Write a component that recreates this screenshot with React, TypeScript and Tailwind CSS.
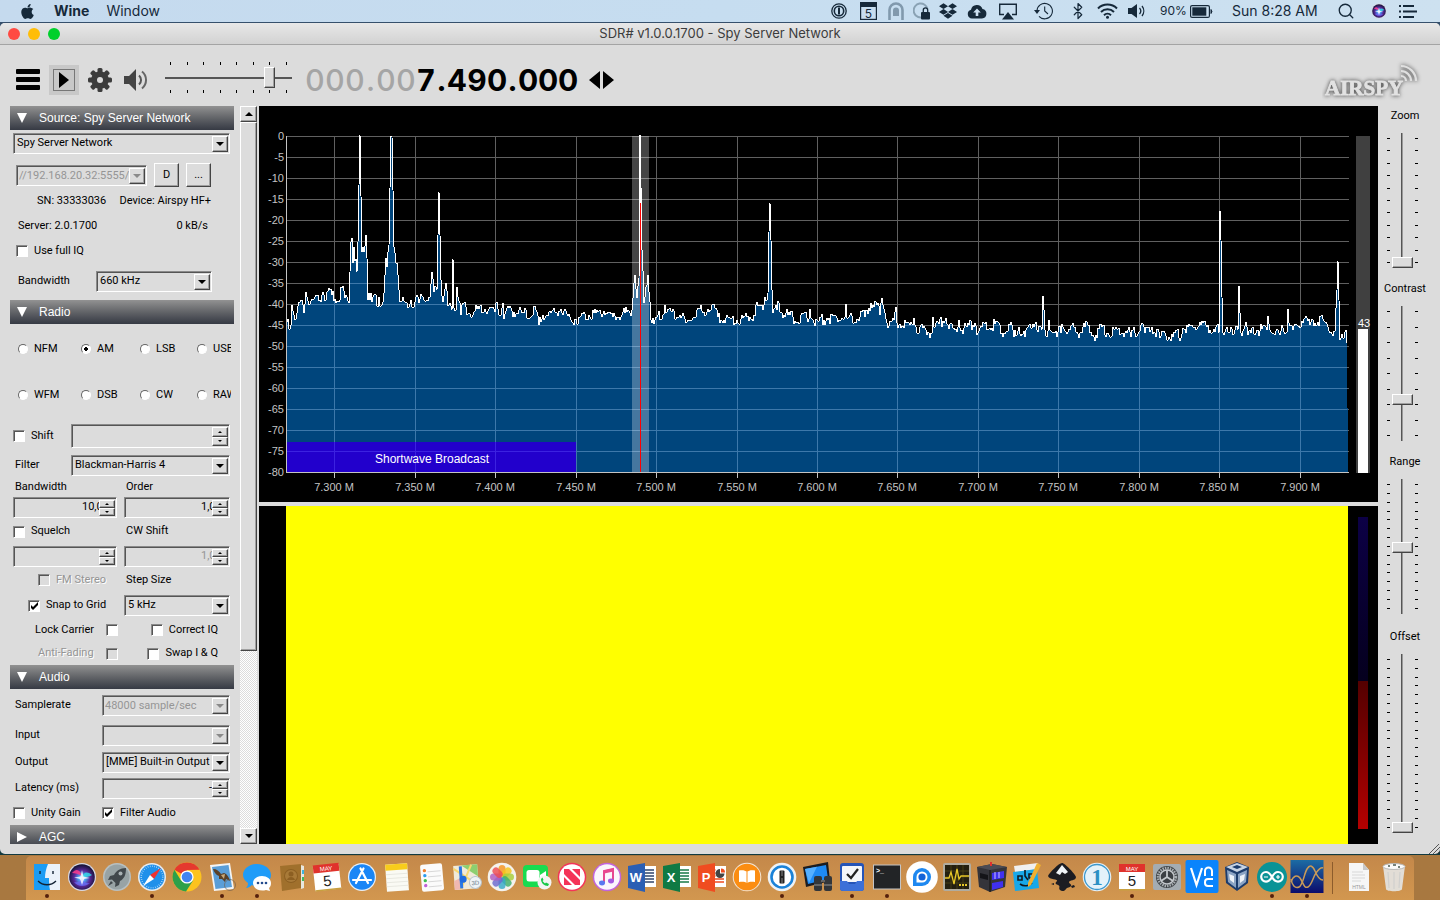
import React from 'react';
import { Bluetooth, Search } from 'lucide-react';
import { FaApple, FaDropbox } from 'react-icons/fa';

const sunken =
  'border border-t-[#8a8a8a] border-l-[#8a8a8a] border-b-white border-r-white shadow-[inset_1px_1px_0_#555]';
const raised =
  'bg-[#dcdcdc] border border-t-white border-l-white border-b-[#444] border-r-[#444] shadow-[inset_-1px_-1px_0_#a0a0a0]';

/* ---------- Mac menu bar ---------- */

const SiriGlyph = ({ className }: { className: string }) => (
  <svg viewBox="0 0 30 30" className={className}>
    <defs>
      <radialGradient id="siri" cx="50%" cy="55%" r="55%">
        <stop offset="0" stopColor="#e8f8ff" />
        <stop offset=".25" stopColor="#4aa0f0" />
        <stop offset=".55" stopColor="#5a2a9c" />
        <stop offset="1" stopColor="#10102e" />
      </radialGradient>
    </defs>
    <circle cx="15" cy="15" r="14" fill="#d8d8e4" />
    <circle cx="15" cy="15" r="12.8" fill="url(#siri)" />
    <path d="M5 11c4-5 8-4 10 3-4-2-7-3-10-3z" fill="#ff3c8e" opacity=".85" />
    <path d="M25 13c-5-4-8-3-10 2 4 0 7 0 10-2z" fill="#35d8e8" opacity=".85" />
    <path d="M7 20c4 1 7-1 8-5 1 5 4 7 8 6-5 4-12 4-16-1z" fill="#6a6cf5" opacity=".8" />
    <path d="M15 8l1.5 6.5L23 16l-6 1-2 6-2-6-6-1.5 6.5-1z" fill="#fff" opacity=".8" />
  </svg>
);

const MenuBar = () => (
  <header className="flex h-[23px] shrink-0 items-center border-b border-[#36506c] bg-linear-to-r from-[#c5daee] via-[#c6ddf0] to-[#cde1f0] font-[Inter,sans-serif] text-sm text-[#16293a]">
    <FaApple className="ml-[19px] size-[17px]" />
    <button className="ml-[18px] font-bold">Wine</button>
    <button className="ml-[17px]">Window</button>
    <div className="ml-auto flex items-center">
      <svg viewBox="0 0 16 16" className="size-4">
        <circle cx="8" cy="8" r="7.2" fill="none" stroke="currentColor" strokeWidth="1.3" />
        <circle cx="8" cy="8" r="4.7" fill="none" stroke="currentColor" strokeWidth="1.6" />
        <rect x="7" y="4.5" width="2" height="7" fill="currentColor" />
      </svg>
      <svg viewBox="0 0 17 18" className="ml-[13px] h-[18px] w-[17px]">
        <rect x=".6" y=".6" width="15.8" height="16.8" fill="none" stroke="currentColor" strokeWidth="1.2" />
        <rect width="17" height="5" fill="currentColor" />
        <text x="8.5" y="15.5" fontSize="12" textAnchor="middle" fill="currentColor">5</text>
      </svg>
      <svg viewBox="0 0 16 18" className="ml-[11px] h-[18px] w-4 text-[#8199ad]">
        <path d="M1.5 18V8a6.5 6.5 0 0 1 13 0v10" fill="none" stroke="currentColor" strokeWidth="2.6" />
        <path d="M5 14V8.5a3 3 0 0 1 6 0V14z" fill="currentColor" />
      </svg>
      <svg viewBox="0 0 17 18" className="ml-[9px] h-[18px] w-[17px]">
        <path d="M8 15.5A7 7 0 1 1 14.5 7" fill="none" stroke="#8aa2b4" strokeWidth="2" />
        <rect x="8" y="10" width="9" height="7.5" rx="1" fill="currentColor" />
        <path d="M10.3 10V8a2.2 2.2 0 0 1 4.4 0v2" fill="none" stroke="currentColor" strokeWidth="1.3" />
      </svg>
      <FaDropbox className="ml-[9px] h-[18px] w-[18px]" />
      <svg viewBox="0 0 20 16" className="ml-[10px] h-4 w-5">
        <path d="M5 15.5a4.5 4.5 0 0 1-1-8.8A6 6 0 0 1 15.5 6 4.8 4.8 0 0 1 15 15.5z" fill="currentColor" />
        <path d="M10 5.5l3.8 4h-2.5v3.5H8.7V9.5H6.2z" fill="#cbdff0" />
      </svg>
      <svg viewBox="0 0 18 17" className="ml-3 h-[17px] w-[18px]">
        <path d="M5 11.5H.7V1.2h16.6v10.3H13" fill="none" stroke="currentColor" strokeWidth="1.4" />
        <path d="M9 9l6 7.5H3z" fill="currentColor" />
      </svg>
      <svg viewBox="0 0 19 18" className="ml-[17px] h-[18px] w-[19px]">
        <path d="M3 9a7.7 7.7 0 1 1 2 5.3" fill="none" stroke="currentColor" strokeWidth="1.1" />
        <path d="M0 8h6L3 12z" fill="currentColor" />
        <path d="M10.7 4.5V9l3.3 3" fill="none" stroke="currentColor" strokeWidth="1.1" />
      </svg>
      <Bluetooth className="ml-4 size-[18px]" strokeWidth={1.6} />
      <svg viewBox="0 0 21 16" className="ml-[10px] h-4 w-[21px]">
        <g fill="none" stroke="currentColor" strokeWidth="2">
          <path d="M1 5.5a13.5 13.5 0 0 1 19 0" />
          <path d="M4 9a9.2 9.2 0 0 1 13 0" />
          <path d="M7 12.2a5 5 0 0 1 7 0" />
        </g>
        <circle cx="10.5" cy="14.3" r="1.5" fill="currentColor" />
      </svg>
      <svg viewBox="0 0 18 16" className="ml-[10px] h-4 w-[18px]">
        <path d="M0 5h3.5L9 1v14l-5.5-4H0z" fill="currentColor" />
        <path d="M11.5 5a4.5 4.5 0 0 1 0 6M14 3a8 8 0 0 1 0 10" fill="none" stroke="currentColor" strokeWidth="1.3" />
      </svg>
      <span className="ml-[14px] w-[30px] text-xs">90%</span>
      <svg viewBox="0 0 23 13" className="h-[13px] w-[23px]">
        <rect x=".6" y=".6" width="18.8" height="11.8" rx="1.5" fill="none" stroke="currentColor" strokeWidth="1.2" />
        <rect x="2.3" y="2.3" width="14" height="8.4" fill="currentColor" />
        <path d="M21 4.5a3 3 0 0 1 0 4z" fill="currentColor" stroke="currentColor" />
      </svg>
      <time className="ml-[19px] w-[105px] whitespace-nowrap">Sun 8:28 AM</time>
      <Search className="size-[18px]" strokeWidth={1.8} />
      <SiriGlyph className="ml-4 size-4" />
      <svg viewBox="0 0 18 13" className="mr-[23px] ml-3 h-[13px] w-[18px]" fill="currentColor">
        <path d="M0 0h2v2H0zM4 0h11v2H4zM0 5.5h2v2H0zM4 5.5h14v2H4zM0 11h2v2H0zM4 11h11v2H4z" />
      </svg>
    </div>
  </header>
);

/* ---------- Toolbar ---------- */

const Ticks = ({ count, vertical }: { count: number; vertical?: boolean }) => (
  <div className={vertical ? 'flex flex-col justify-between py-[5px]' : 'flex justify-between px-[5px]'} aria-hidden>
    {Array.from({ length: count }, (_, i) => (
      <span key={i} className={vertical ? 'h-px w-[3px] bg-black' : 'h-[3px] w-px bg-black'} />
    ))}
  </div>
);

const digits = '000.007.490.000'.split('');

const Toolbar = () => (
  <div className="flex h-[61px] shrink-0 items-center pt-2">
    <button aria-label="Menu" className="ml-4 flex w-6 flex-col gap-[3px]">
      <span className="h-[5px] rounded-[1px] bg-black" />
      <span className="h-[5px] rounded-[1px] bg-black" />
      <span className="h-[5px] rounded-[1px] bg-black" />
    </button>
    <button aria-label="Start" className="ml-[9px] flex size-[30px] items-center justify-center bg-[#c8c8c8]">
      <span className="flex size-[22px] items-center justify-center border border-[#777]">
        <svg viewBox="0 0 10 16" className="h-4 w-2.5">
          <path d="M0 0l10 8-10 8z" />
        </svg>
      </span>
    </button>
    <button aria-label="Settings" className="ml-[9px]">
      <svg viewBox="0 0 24 24" className="size-6 text-[#3c3c3c]">
        {[0, 45, 90, 135].map((a) => (
          <rect key={a} x="9.5" y="0" width="5" height="24" rx="1.5" fill="currentColor" transform={`rotate(${a} 12 12)`} />
        ))}
        <circle cx="12" cy="12" r="8.8" fill="currentColor" />
        <circle cx="12" cy="12" r="3" fill="#dcdcdc" />
      </svg>
    </button>
    <button aria-label="Mute" className="ml-3">
      <svg viewBox="0 0 24 24" className="size-6">
        <path d="M0 8h5l7-7v22l-7-7H0z" fill="#444" />
        <path d="M15 7.5a6 6 0 0 1 0 9" fill="none" stroke="#555" strokeWidth="2" />
        <path d="M18 3.5a11 11 0 0 1 0 17" fill="none" stroke="#666" strokeWidth="2" />
      </svg>
    </button>
    <div className="ml-[17px] flex w-[127px] flex-col gap-0.5 pb-1">
      <Ticks count={8} />
      <input
        type="range"
        aria-label="Volume"
        defaultValue={85}
        className="h-[21px] w-full appearance-none bg-[linear-gradient(#555,#555)] bg-[length:100%_2px] bg-center bg-no-repeat [&::-webkit-slider-thumb]:h-[21px] [&::-webkit-slider-thumb]:w-[11px] [&::-webkit-slider-thumb]:appearance-none [&::-webkit-slider-thumb]:border [&::-webkit-slider-thumb]:border-t-white [&::-webkit-slider-thumb]:border-r-[#444] [&::-webkit-slider-thumb]:border-b-[#444] [&::-webkit-slider-thumb]:border-l-white [&::-webkit-slider-thumb]:bg-[#dcdcdc] [&::-webkit-slider-thumb]:shadow-[inset_-1px_-1px_0_#a0a0a0]"
      />
      <Ticks count={8} />
    </div>
    <div className="ml-[13px] flex font-[Inter,sans-serif] text-[30px] leading-8">
      {digits.map((d, i) => (
        <span
          key={i}
          className={`flex justify-center ${d === '.' ? 'w-[11px]' : 'w-5'} ${i < 6 ? 'font-medium text-[#a5a5a5]' : 'font-bold text-black'}`}
        >
          {d}
        </span>
      ))}
    </div>
    <button aria-label="Tuning style" className="ml-[11px]">
      <svg viewBox="0 0 25 18" className="h-[18px] w-[25px]">
        <path d="M11 0v18L0 9zM14 0v18L25 9z" />
      </svg>
    </button>
    <svg viewBox="0 0 100 44" className="mr-[18px] ml-auto h-11 w-[100px]" role="img" aria-label="Airspy">
      <g className="drop-shadow-[0_0_2px_#333]">
        <text x="3" y="37" fontSize="21" className="font-['Liberation_Serif',serif] font-bold" fill="#e2e2e2" stroke="#e2e2e2" strokeWidth=".8">
          AIRSPY
        </text>
        <path d="M79 8a15 15 0 0 1 15 15M79 13a10 10 0 0 1 10 10M79 18a5 5 0 0 1 5 5" fill="none" stroke="#e0e0e0" strokeWidth="2.2" />
      </g>
    </svg>
  </div>
);

/* ---------- Sidebar controls ---------- */

const Arrow = ({ muted }: { muted?: boolean }) => (
  <svg viewBox="0 0 8 4" className="h-1 w-2">
    <path d="M0 0h8L4 4z" fill={muted ? '#8a8a8a' : '#000'} />
  </svg>
);

type ComboProps = { label: string; value: string; disabled?: boolean; className: string };

const Combo = ({ label, value, disabled, className }: ComboProps) => (
  <div className={`flex h-[21px] p-px pt-0.5 ${sunken} ${className}`}>
    <select
      aria-label={label}
      disabled={disabled}
      className="min-w-0 flex-1 appearance-none bg-transparent pb-[3px] pl-0.5 leading-none disabled:pb-0 disabled:pl-px disabled:text-[#959595] disabled:opacity-100"
    >
      <option>{value}</option>
    </select>
    <span className={`flex w-4 items-center justify-center ${raised}`}>
      <Arrow muted={disabled} />
    </span>
  </div>
);

type SpinProps = { label: string; value?: string; disabled?: boolean; className: string; inputClass?: string };

const Spin = ({ label, value = '', disabled, className, inputClass = '' }: SpinProps) => (
  <div className={`flex p-px pt-0.5 ${sunken} ${className}`}>
    <input
      type="text"
      aria-label={label}
      defaultValue={value}
      disabled={disabled}
      className={`min-w-0 flex-1 bg-transparent pb-0.5 leading-none disabled:text-[#959595] ${inputClass}`}
    />
    <div className="flex w-4 flex-col">
      <button aria-label={`${label} up`} className={`flex flex-1 items-center justify-center ${raised}`}>
        <svg viewBox="0 0 4 2" className="h-0.5 w-1"><path d="M2 0l2 2H0z" /></svg>
      </button>
      <button aria-label={`${label} down`} className={`flex flex-1 items-center justify-center ${raised}`}>
        <svg viewBox="0 0 4 2" className="h-0.5 w-1"><path d="M0 0h4L2 2z" /></svg>
      </button>
    </div>
  </div>
);

type CheckProps = { label: string; checked?: boolean; disabled?: boolean; before?: boolean; className?: string; gap?: string };

const Check = ({ label, checked, disabled, before, className = '', gap = 'gap-1.5' }: CheckProps) => (
  <label
    className={`flex items-center whitespace-nowrap ${gap} ${before ? 'flex-row-reverse' : ''} ${disabled ? 'text-[#959595] [text-shadow:1px_1px_#fff]' : ''} ${className}`}
  >
    <span className="grid">
      <input
        type="checkbox"
        defaultChecked={checked}
        disabled={disabled}
        className={`size-3 appearance-none [grid-area:1/1] ${disabled ? '' : 'bg-white'} ${sunken}`}
      />
      {checked && (
        <svg viewBox="0 0 12 12" className="pointer-events-none size-3 [grid-area:1/1]">
          <path d="M3 5v3l2 2 5-5V2L5 7z" />
        </svg>
      )}
    </span>
    {label}
  </label>
);

const Radio = ({ label, checked }: { label: string; checked?: boolean }) => (
  <label className="flex items-center gap-1.5">
    <input
      type="radio"
      name="mode"
      defaultChecked={checked}
      className="size-2.5 shrink-0 appearance-none rounded-full border border-t-[#666] border-r-white border-b-white border-l-[#666] bg-white checked:bg-[radial-gradient(circle,#000_2px,#fff_2px)]"
    />
    {label}
  </label>
);

const PanelHeader = ({ title, closed }: { title: string; closed?: boolean }) => (
  <button className="flex h-6 w-full shrink-0 items-center bg-linear-to-b from-[#929292] via-[#626468] to-[#363a44] pl-[7px] font-['Liberation_Sans',sans-serif] text-xs text-white">
    <svg viewBox="0 0 10 10" className="size-2.5" fill="#fff">
      <path d={closed ? 'M0 0l10 5-10 5z' : 'M0 0h10L5 10z'} />
    </svg>
    <span className="ml-3">{title}</span>
  </button>
);

const Sidebar = () => (
  <aside className="ml-2.5 flex w-56 shrink-0 flex-col overflow-hidden">
    <PanelHeader title="Source: Spy Server Network" />
    <div className="flex h-[27px] shrink-0 items-center pl-[3px]">
      <Combo label="Source" value="Spy Server Network" className="w-[217px]" />
    </div>
    <div className="flex h-9 shrink-0 items-center pl-1.5">
      <Combo label="Server address" value="//192.168.20.32:5555/" disabled className="w-[131px]" />
      <button className={`ml-[7px] h-6 w-[25px] ${raised}`}>D</button>
      <button className={`ml-[7px] h-6 w-[25px] ${raised}`}>...</button>
    </div>
    <div className="flex h-4 shrink-0 items-center justify-between pr-[23px] pl-[27px]">
      <span>SN: 33333036</span>
      <span>Device: Airspy HF+</span>
    </div>
    <div className="flex h-[34px] shrink-0 items-center justify-between pr-[26px] pl-2">
      <span>Server: 2.0.1700</span>
      <span>0 kB/s</span>
    </div>
    <Check label="Use full IQ" className="h-4 shrink-0 pl-1.5" />
    <div className="flex h-[41px] shrink-0 items-center pt-1 pl-2">
      <span className="w-[78px]">Bandwidth</span>
      <Combo label="Source bandwidth" value="660 kHz" className="w-[116px]" />
    </div>

    <PanelHeader title="Radio" />
    <div className="mr-[3px] grid shrink-0 grid-cols-[63px_59px_57px_60px] grid-rows-[50px_42px] items-center overflow-hidden pl-2">
      <Radio label="NFM" />
      <Radio label="AM" checked />
      <Radio label="LSB" />
      <Radio label="USB" />
      <Radio label="WFM" />
      <Radio label="DSB" />
      <Radio label="CW" />
      <Radio label="RAW" />
    </div>
    <div className="flex h-9 shrink-0 items-center pt-1 pl-[3px]">
      <Check label="Shift" className="w-[58px]" />
      <Spin label="Shift frequency" className="h-6 w-[159px]" />
    </div>
    <div className="flex h-[26px] shrink-0 items-center pl-[5px]">
      <span className="w-14">Filter</span>
      <Combo label="Filter" value="Blackman-Harris 4" className="w-[159px]" />
    </div>
    <div className="flex h-[18px] shrink-0 items-center pl-[5px]">
      <span className="w-[111px]">Bandwidth</span>
      <span>Order</span>
    </div>
    <div className="flex h-[22px] shrink-0 items-center gap-[7px] pl-[3px]">
      <Spin label="Filter bandwidth" value="10,000" className="h-[21px] w-[104px]" inputClass="pl-[67px]" />
      <Spin label="Filter order" value="1,000" className="h-[21px] w-[106px]" inputClass="pl-[75px]" />
    </div>
    <div className="flex h-[27px] shrink-0 items-center pl-[3px]">
      <Check label="Squelch" className="w-[113px]" />
      <span>CW Shift</span>
    </div>
    <div className="flex h-[22px] shrink-0 items-center gap-[7px] pl-[3px]">
      <Spin label="Squelch level" className="h-[21px] w-[104px]" />
      <Spin label="CW shift" value="1,000" disabled className="h-[21px] w-[106px]" inputClass="pl-[75px]" />
    </div>
    <div className="flex h-[26px] shrink-0 items-center pl-7">
      <Check label="FM Stereo" disabled className="w-[88px]" />
      <span>Step Size</span>
    </div>
    <div className="flex h-[25px] shrink-0 items-center pl-[18px]">
      <Check label="Snap to Grid" checked className="w-24" />
      <Combo label="Step size" value="5 kHz" className="w-[106px]" />
    </div>
    <div className="flex h-6 shrink-0 items-center justify-between pr-4 pl-[25px]">
      <Check label="Lock Carrier" before gap="gap-3" />
      <Check label="Correct IQ" />
    </div>
    <div className="flex h-[23px] shrink-0 items-center justify-between pr-4 pl-7">
      <Check label="Anti-Fading" disabled before gap="gap-3" />
      <Check label="Swap I & Q" />
    </div>

    <PanelHeader title="Audio" />
    <div className="flex h-8 shrink-0 items-center pl-[5px]">
      <span className="w-[87px]">Samplerate</span>
      <Combo label="Samplerate" value="48000 sample/sec" disabled className="w-32" />
    </div>
    <div className="flex h-7 shrink-0 items-center pl-[5px]">
      <span className="w-[87px]">Input</span>
      <Combo label="Input" value="" disabled className="w-32" />
    </div>
    <div className="flex h-[26px] shrink-0 items-center pl-[5px]">
      <span className="w-[87px]">Output</span>
      <Combo label="Output" value="[MME] Built-in Output" className="w-32" />
    </div>
    <div className="flex h-[26px] shrink-0 items-center pl-[5px]">
      <span className="w-[87px]">Latency (ms)</span>
      <Spin label="Latency" value="-" className="h-[21px] w-32" inputClass="text-right" />
    </div>
    <div className="flex h-6 shrink-0 items-center pl-[3px]">
      <Check label="Unity Gain" className="w-[89px]" />
      <Check label="Filter Audio" checked />
    </div>
    <PanelHeader title="AGC" closed />
  </aside>
);

const SidebarScroll = () => (
  <div className="ml-1.5 flex w-[17px] shrink-0 flex-col bg-[repeating-conic-gradient(#fff_0_25%,#dcdcdc_0_50%)] bg-[length:2px_2px]">
    <button aria-label="Scroll up" className={`flex h-4 items-center justify-center ${raised}`}>
      <span className="rotate-180"><Arrow /></span>
    </button>
    <div className={`h-[529px] ${raised}`} />
    <button aria-label="Scroll down" className={`mt-auto flex h-4 items-center justify-center ${raised}`}>
      <Arrow />
    </button>
  </div>
);

/* ---------- Spectrum ---------- */

const trace: [number, number][] = [
  [28, 216], [32, 219], [33, 199], [35, 209], [38, 207], [40, 196], [44, 199], [45, 207], [47, 186], [50, 199],
  [54, 194], [61, 194], [64, 186], [67, 194], [69, 185], [73, 189], [80, 196], [83, 182], [86, 192], [90, 197],
  [91, 166], [92, 136], [93, 132], [94, 157], [95, 141], [98, 166], [99, 136], [100, 79], [101, 29], [102, 90],
  [103, 146], [104, 141], [105, 146], [107, 129], [108, 152], [109, 194], [110, 187], [113, 196], [117, 189], [118, 200],
  [120, 191], [122, 200], [124, 196], [126, 169], [127, 152], [128, 161], [130, 139], [131, 82], [132, 30], [133, 31],
  [134, 84], [135, 141], [138, 157], [139, 169], [140, 184], [141, 196], [148, 197], [150, 201], [152, 194], [155, 201],
  [157, 191], [160, 197], [164, 191], [171, 191], [173, 166], [175, 186], [178, 184], [179, 129], [180, 86], [181, 129],
  [182, 174], [184, 196], [187, 177], [189, 200], [193, 204], [194, 153], [195, 202], [197, 204], [198, 181], [200, 195],
  [202, 209], [204, 197], [210, 207], [220, 203], [230, 203], [236, 206], [238, 196], [241, 210], [244, 197], [245, 213],
  [248, 202], [255, 206], [265, 207], [272, 211], [276, 200], [280, 219], [284, 209], [297, 206], [302, 203], [312, 214],
  [330, 209], [345, 205], [354, 211], [366, 207], [373, 204], [375, 177], [376, 169], [378, 192], [380, 174], [381, 29],
  [382, 81], [383, 144], [385, 197], [387, 181], [389, 169], [391, 196], [392, 214], [395, 218], [398, 211], [404, 209],
  [406, 199], [408, 206], [421, 209], [427, 217], [434, 212], [440, 202], [444, 207], [453, 199], [456, 202], [459, 211],
  [478, 214], [488, 211], [495, 209], [497, 199], [504, 204], [506, 191], [509, 187], [510, 126], [511, 97], [512, 134],
  [513, 184], [514, 207], [518, 204], [520, 197], [523, 207], [534, 211], [541, 217], [546, 206], [549, 216], [551, 203],
  [555, 217], [568, 212], [578, 212], [586, 211], [587, 198], [588, 212], [601, 211], [604, 204], [606, 211], [610, 202],
  [612, 197], [618, 199], [621, 209], [623, 192], [626, 207], [628, 217], [635, 214], [637, 201], [638, 217], [651, 219],
  [655, 212], [657, 221], [673, 227], [674, 211], [676, 221], [687, 212], [689, 219], [698, 226], [700, 214], [703, 224],
  [716, 217], [719, 227], [726, 218], [731, 222], [739, 216], [743, 227], [753, 219], [755, 231], [760, 221], [766, 231],
  [769, 221], [777, 216], [779, 226], [783, 224], [784, 190], [786, 224], [788, 231], [790, 214], [793, 226], [798, 231],
  [803, 218], [809, 226], [816, 221], [821, 227], [829, 219], [835, 231], [843, 221], [848, 227], [869, 224], [872, 231],
  [875, 221], [878, 230], [882, 219], [886, 227], [893, 221], [901, 232], [906, 227], [914, 231], [918, 224], [920, 232],
  [924, 222], [934, 221], [941, 216], [951, 224], [958, 219], [960, 227], [961, 105], [962, 134], [963, 191], [964, 227],
  [968, 221], [974, 229], [979, 224], [980, 180], [982, 227], [987, 216], [989, 229], [998, 224], [1008, 224], [1009, 210],
  [1011, 224], [1021, 229], [1024, 222], [1028, 226], [1029, 203], [1030, 217], [1034, 224], [1038, 219], [1046, 212], [1051, 219],
  [1054, 214], [1065, 215], [1069, 221], [1076, 226], [1078, 184], [1079, 155], [1080, 194], [1081, 234], [1087, 224], [1088, 237],
];

// fills the gaps between the traced bins with a repeatable noise floor
const buildLine = () => {
  const out: string[] = [];
  for (let i = 0; i < trace.length - 1; i++) {
    const [x0, y0] = trace[i];
    const [x1, y1] = trace[i + 1];
    out.push(`${x0} ${y0}`);
    for (let x = x0 + 1; x < x1; x++) {
      const noise = ((Math.sin(x * 12.9898) * 43758.5453) % 1) * 6;
      out.push(`${x} ${Math.round(y0 + ((y1 - y0) * (x - x0)) / (x1 - x0) + noise)}`);
    }
  }
  const last = trace[trace.length - 1];
  out.push(`${last[0]} ${last[1]}`);
  return out.join('L');
};

const line = buildLine();
const area = `M27 366L${line}L1089 366z`;
const columns = [75, 156, 236, 317, 397, 478, 558, 638, 719, 799, 880, 960, 1041];
const gridPath =
  columns.map((x) => `M${x} 30h1v336h-1z`).join('') +
  Array.from({ length: 16 }, (_, i) => `M27 ${30 + i * 21}h1063v1h-1063z`).join('');

const Spectrum = () => (
  <svg viewBox="0 0 1119 396" className="block w-full shrink-0 bg-black font-['Liberation_Sans',sans-serif] text-[11px]">
    <defs>
      <clipPath id="floor">
        <path d={area} />
      </clipPath>
    </defs>
    <g shapeRendering="crispEdges">
      <path d={gridPath} fill="#606060" />
      <path d={area} fill="#00457c" />
      <path d={gridPath} fill="#3d78aa" clipPath="url(#floor)" />
      <rect x="27" y="336" width="290" height="30" fill="#2200cc" />
      <path d="M27 345h290v1H27zM75 336h1v30h-1zM156 336h1v30h-1zM236 336h1v30h-1z" fill="#3c22e0" />
      <path d={`M${line}`} fill="none" stroke="#fff" />
      <rect x="373" y="30" width="17" height="336" fill="#fff" opacity=".27" />
      <rect x="381" y="97" width="1" height="269" fill="#f00" />
      <rect x="381" y="29" width="1" height="68" fill="#fff" />
      <path d="M27 30h1v336h1062v1H27z" fill="#c4c4c4" />
      {columns.map((x) => (
        <rect key={x} x={x} y="366" width="1" height="6" fill="#c4c4c4" />
      ))}
      <rect x="1097" y="30" width="14" height="337" fill="#404040" />
      <rect x="1099" y="223" width="10" height="144" fill="#fff" />
    </g>
    {Array.from({ length: 17 }, (_, i) => (
      <text key={i} x="25" y={34 + i * 21} textAnchor="end" fill="#c4c4c4">
        {i === 0 ? '0' : `-${i * 5}`}
      </text>
    ))}
    {columns.map((x, i) => (
      <text key={x} x={x} y="385" textAnchor="middle" fill="#c4c4c4">
        {`${(7.3 + i * 0.05).toFixed(3)} M`}
      </text>
    ))}
    <text x="173" y="357" textAnchor="middle" fill="#fff" className="text-xs">
      Shortwave Broadcast
    </text>
    <text x="1105" y="221" textAnchor="middle" fill="#fff">43</text>
  </svg>
);

const Waterfall = () => (
  <div className="mt-1 flex min-h-0 flex-1 bg-black">
    <div className="ml-[27px] flex-1 bg-[#ffff00]" />
    <div className="mx-2.5 flex w-2.5 flex-col pt-[11px] pb-[15px]">
      <div className="flex-1 bg-linear-to-b from-[#0c0046] to-[#05001e]" />
      <div className="h-[148px] bg-linear-to-b from-[#540000] to-[#b40000]" />
    </div>
  </div>
);

/* ---------- Display sliders ---------- */

type DisplaySliderProps = { label: string; value: number; ticks: number; className?: string; track?: string };

const DisplaySlider = ({ label, value, ticks, className = '', track = 'h-[135px]' }: DisplaySliderProps) => (
  <label className={`flex flex-col items-center ${className}`}>
    <span className="mb-2 h-[19px] pl-1.5 leading-[19px]">{label}</span>
    <div className={`flex gap-0.5 ${track}`}>
      <Ticks count={ticks} vertical />
      <input
        type="range"
        defaultValue={value}
        className="h-full w-[21px] appearance-none bg-[linear-gradient(90deg,#555_50%,#999_50%)] bg-[length:2px_100%] bg-center bg-no-repeat [direction:rtl] [writing-mode:vertical-lr] [&::-webkit-slider-thumb]:h-[11px] [&::-webkit-slider-thumb]:w-[21px] [&::-webkit-slider-thumb]:appearance-none [&::-webkit-slider-thumb]:border [&::-webkit-slider-thumb]:border-t-white [&::-webkit-slider-thumb]:border-r-[#444] [&::-webkit-slider-thumb]:border-b-[#444] [&::-webkit-slider-thumb]:border-l-white [&::-webkit-slider-thumb]:bg-[#dcdcdc] [&::-webkit-slider-thumb]:shadow-[inset_-1px_-1px_0_#a0a0a0]"
      />
      <Ticks count={ticks} vertical />
    </div>
  </label>
);

const DisplayControls = () => (
  <div className="flex w-[62px] shrink-0 flex-col gap-[11px] pr-[14px] pb-[11px]">
    <DisplaySlider label="Zoom" value={0} ticks={11} />
    <DisplaySlider label="Contrast" value={29} ticks={9} />
    <DisplaySlider label="Range" value={49} ticks={15} />
    <DisplaySlider label="Offset" value={0} ticks={20} className="mt-0.5 min-h-0 flex-1" track="min-h-0 flex-1" />
  </div>
);

/* ---------- Dock ---------- */

const Calendar = () => (
  <>
    <path d="M2 3h26v25H2z" fill="#fff" />
    <path d="M2 2h26v8H2z" fill="#e0322c" />
    <path d="M2 27h26v1.5H2z" fill="#c8a040" />
    <text x="15" y="8.6" fontSize="6" textAnchor="middle" fill="#fff">MAY</text>
    <text x="15" y="24" fontSize="15" textAnchor="middle" fill="#222">5</text>
  </>
);

const Office = ({ letter, color, dark }: { letter: string; color: string; dark: string }) => (
  <>
    <rect x="15" y="4" width="14" height="21" fill="#fff" />
    <path d="M18 8h9M18 11h9M18 14h9M18 17h9M18 20h9" stroke={dark} strokeWidth="1.3" />
    <path d="M1 4l17-3v29L1 26z" fill={color} />
    <text x="9" y="20" fontSize="13" fontWeight="bold" textAnchor="middle" fill="#fff">{letter}</text>
  </>
);

const petals = ['#f7941e', '#f5c518', '#a6ce39', '#3fae6a', '#35a8c8', '#6a6ad0', '#b05ac0', '#ee4a50'];

const apps: { name: string; running?: boolean; art: React.ReactNode }[] = [
  {
    name: 'Finder', running: true,
    art: (
      <>
        <rect x="2" y="2" width="26" height="26" fill="#eaf2fa" />
        <path d="M2 2h14c-2 5-3 9-3 14h4c0 4 0 8 1 12H2z" fill="#1c9cf4" />
        <path d="M8 9v3M21 9v3" stroke="#123" strokeWidth="1.4" />
        <path d="M6 19c5 5 13 5 18 0" fill="none" stroke="#123" strokeWidth="1.3" />
      </>
    ),
  },
  { name: 'Siri', art: <SiriGlyph className="" /> },
  {
    name: 'Launchpad',
    art: (
      <>
        <circle cx="15" cy="15" r="14" fill="#b8c0c2" />
        <circle cx="15" cy="15" r="12.5" fill="#98a3a5" />
        <path d="M24 6c-6 0-10 3-12 7l-4 1-2 4 4-.5 3.5 3.5-.5 4 4-2 1-4c4-2 6-6 6-13z" fill="#41484c" />
        <circle cx="18.5" cy="11.5" r="2" fill="#a9b2b4" />
        <path d="M9 19l-3 5 5-3z" fill="#41484c" />
      </>
    ),
  },
  {
    name: 'Safari', running: true,
    art: (
      <>
        <circle cx="15" cy="15" r="14" fill="#e8ecf0" />
        <circle cx="15" cy="15" r="12.5" fill="#2090ea" />
        <circle cx="15" cy="15" r="10.8" fill="none" stroke="#c8e4fa" strokeWidth="1.6" strokeDasharray=".6 1.6" />
        <path d="M24 6L13 13l4 4z" fill="#ee3030" />
        <path d="M6 24l7-11 4 4z" fill="#fff" />
      </>
    ),
  },
  {
    name: 'Chrome',
    art: (
      <>
        <circle cx="15" cy="15" r="14.5" fill="#fcc31e" />
        <path d="M15 15L2.4 7.8A14.5 14.5 0 0 1 27.6 7.8L15 8z" fill="#e5392e" />
        <path d="M2.4 7.8A14.5 14.5 0 0 0 14 29.5L21 18.5 9 18.5z" fill="#2da04a" />
        <circle cx="15" cy="15" r="6.6" fill="#fff" />
        <circle cx="15" cy="15" r="5.3" fill="#4284f0" />
      </>
    ),
  },
  {
    name: 'Mail', running: true,
    art: (
      <>
        <path d="M3 3l20-2 4 26-20 2z" fill="#f4f4f4" />
        <path d="M5 5l16.500-2 3.500 22-16.500 2z" fill="#5a9ed8" />
        <path d="M6 7c4 0 6 2 8 5l3-1c3 1 5 4 6 8l-4-2-1 3-3-3-3 0 0-3c-3-1-5-4-6-7z" fill="#5a4028" />
        <path d="M14 13l4-1-1 5z" fill="#c8a878" />
        <circle cx="23" cy="23" r="5.5" fill="none" stroke="#6c5a48" opacity=".6" />
      </>
    ),
  },
  {
    name: 'Messages', running: true,
    art: (
      <>
        <path d="M15 2c8 0 14 5 14 11s-6 11-14 11c-2 0-4 0-5-1-2 2-4 3-6 3 2-2 2-4 2-5-3-2-5-5-5-8C1 7 7 2 15 2z" fill="#1f9cf8" />
        <path d="M20 14c5 0 9 3 9 7 0 3-1 4-2 5l1 3-4-1c-7 2-13-2-13-7 0-4 4-7 9-7z" fill="#fff" />
        <g fill="#234a8c"><circle cx="16" cy="21" r="1.3" /><circle cx="20" cy="21" r="1.3" /><circle cx="24" cy="21" r="1.3" /></g>
      </>
    ),
  },
  {
    name: 'Contacts',
    art: (
      <>
        <path d="M24 3l3 1v22l-3 1z" fill="#e8e8e0" />
        <path d="M25 8h2v4h-2z" fill="#3cb4e0" /><path d="M25 15h2v4h-2z" fill="#40b860" />
        <path d="M3 4l21-2v24L5 29z" fill="#a0702c" />
        <circle cx="14" cy="14" r="7" fill="#8c5f22" />
        <circle cx="14" cy="14" r="6" fill="#a87a38" />
        <circle cx="14" cy="12" r="2.5" fill="#8c5f22" /><path d="M10 18c1-4 7-4 8 0z" fill="#8c5f22" />
      </>
    ),
  },
  { name: 'Calendar', art: <g transform="rotate(-6 15 15)"><Calendar /></g> },
  {
    name: 'App Store',
    art: (
      <>
        <circle cx="15" cy="15" r="14" fill="#e8f0f8" />
        <circle cx="15" cy="15" r="12.8" fill="#1a86f6" />
        <path d="M16.5 6.5L9 21M13.5 6.5L21 21M6 18h12M20.5 18H24" stroke="#fff" strokeWidth="2.2" strokeLinecap="round" />
      </>
    ),
  },
  {
    name: 'Notes',
    art: (
      <g transform="rotate(-4 15 15)">
        <rect x="4" y="2" width="22" height="27" fill="#fafaf4" />
        <rect x="4" y="2" width="22" height="6" fill="#f8cc1c" />
        <path d="M4 12h22M4 16h22M4 20h22M4 24h22" stroke="#e0e0d8" strokeWidth=".7" />
      </g>
    ),
  },
  {
    name: 'Reminders',
    art: (
      <g transform="rotate(-5 15 15)">
        <rect x="4" y="2" width="22" height="27" rx="2" fill="#fbfbfb" />
        <circle cx="8" cy="8" r="1.7" fill="#f08030" /><circle cx="8" cy="13" r="1.7" fill="#2a9cf0" />
        <circle cx="8" cy="18" r="1.7" fill="#40c050" /><circle cx="8" cy="23" r="1.7" fill="#c060d8" />
        <path d="M11 9.5h13M11 14.5h13M11 19.5h13M11 24.5h13" stroke="#d0d0d0" strokeWidth=".8" />
      </g>
    ),
  },
  {
    name: 'Maps',
    art: (
      <g transform="rotate(-4 15 15)">
        <path d="M2 3h24v24H2z" fill="#f0ead8" />
        <path d="M10 3h16v12z" fill="#8ccf70" /><path d="M2 18l8-3v12H2z" fill="#f0b8b0" />
        <path d="M2 6l24 18M20 3L8 27" stroke="#f7d870" strokeWidth="2" />
        <path d="M9 4v22" stroke="#2a78e4" strokeWidth="3" />
        <circle cx="11" cy="17" r="3.5" fill="#1f6ce0" />
        <circle cx="23" cy="21" r="6" fill="#eef3f6" stroke="#b8c4cc" />
        <text x="23" y="23.5" fontSize="6" textAnchor="middle" fill="#6a7c88">3D</text>
      </g>
    ),
  },
  {
    name: 'Photos',
    art: (
      <>
        <circle cx="15" cy="15" r="14.3" fill="#f4f2ee" />
        {petals.map((c, i) => (
          <rect key={c} x="11.5" y="3" width="7" height="11.5" rx="3.5" fill={c} opacity=".82" transform={`rotate(${i * 45} 15 15)`} />
        ))}
      </>
    ),
  },
  {
    name: 'FaceTime',
    art: (
      <>
        <rect x="1" y="3" width="25" height="22" rx="4" fill="#18dc50" />
        <rect x="4.5" y="8" width="13" height="11.5" rx="2.5" fill="#fff" />
        <path d="M18 13l6-4v10l-6-3z" fill="#fff" />
        <circle cx="22.5" cy="20.5" r="7" fill="#f4f4f4" />
        <path d="M19 17c0 4 3 7 7 7l1-2-3-1.5-1 1-2.5-2.5 1-1-1-2.5z" fill="#18c848" />
      </>
    ),
  },
  {
    name: 'News',
    art: (
      <>
        <circle cx="15" cy="15" r="14.3" fill="#f43458" />
        <circle cx="15" cy="15" r="12.8" fill="#fff" />
        <path d="M7 7h5l11 11v5h-5L7 12zM15 7h8v8zM7 15v8h8z" fill="#f43458" />
      </>
    ),
  },
  {
    name: 'iTunes',
    art: (
      <>
        <circle cx="15" cy="15" r="14.3" fill="#c264dc" />
        <circle cx="15" cy="15" r="12.8" fill="#fbf6fc" />
        <path d="M12 21V9l9-2v12" fill="none" stroke="#e84890" strokeWidth="2" />
        <path d="M12 10l9-2" stroke="#e84890" strokeWidth="3" />
        <ellipse cx="10" cy="21" rx="3" ry="2.4" fill="#5a78f0" /><ellipse cx="19" cy="19" rx="3" ry="2.4" fill="#a45ae0" />
      </>
    ),
  },
  { name: 'Word', art: <Office letter="W" color="#2b5fb4" dark="#30466c" /> },
  { name: 'Excel', art: <Office letter="X" color="#0f7a44" dark="#1a7a48" /> },
  {
    name: 'PowerPoint',
    art: (
      <>
        <Office letter="P" color="#f04c20" dark="#f04c20" />
        <rect x="18.5" y="6" width="10" height="10" fill="#fff" />
        <path d="M23 7a4.5 4.5 0 1 0 4.5 4.5H23z" fill="#444" /><path d="M24 6.5a4 4 0 0 1 4 4h-4z" fill="#f04c20" />
      </>
    ),
  },
  {
    name: 'Books',
    art: (
      <>
        <circle cx="15" cy="15" r="14.3" fill="#f2e8dc" />
        <circle cx="15" cy="15" r="13.3" fill="#fb8d12" />
        <path d="M15 10c-2-2-5-2-8-1.5V20c3-.5 6-.5 8 1 2-1.5 5-1.5 8-1V8.5C20 8 17 8 15 10z" fill="#fff" />
        <path d="M15 10v11" stroke="#fb8d12" />
      </>
    ),
  },
  {
    name: '1Password', running: true,
    art: (
      <>
        <circle cx="15" cy="15" r="14.3" fill="#eef2f5" />
        <circle cx="15" cy="15" r="10.5" fill="#fff" stroke="#1a82d8" strokeWidth="2.6" />
        <rect x="12.5" y="8.5" width="5" height="13" rx="1" fill="#222" />
        <path d="M15 9v5M15 16v5" stroke="#888" strokeWidth="1" />
      </>
    ),
  },
  {
    name: 'Remote Desktop',
    art: (
      <>
        <path d="M1 5l25-5 2 19-24 6z" fill="#1c1c20" />
        <path d="M3 7l21-4 2 14-20 5z" fill="#1e8af4" />
        <path d="M3 7l12-2.3L7 21z" fill="#56b0ff" />
        <rect x="12" y="14" width="8" height="15" rx="2" fill="#33363a" /><rect x="22" y="14" width="8" height="15" rx="2" fill="#33363a" />
        <path d="M12 23h8M22 23h8M19 19h4" stroke="#777" strokeWidth="1.5" />
      </>
    ),
  },
  {
    name: 'Tasks', running: true,
    art: (
      <>
        <rect x="3" y="1" width="24" height="28" rx="3" fill="#2454b8" />
        <rect x="5" y="4" width="20" height="16" rx="1" fill="#f4f6fa" />
        <path d="M3 19h7l2 3h6l2-3h7v7a3 3 0 0 1-3 3H6a3 3 0 0 1-3-3z" fill="#3c70d8" />
        <path d="M10 12l4 4 7-9" fill="none" stroke="#222" strokeWidth="2.2" />
      </>
    ),
  },
  {
    name: 'Terminal', running: true,
    art: (
      <>
        <rect x="1" y="2.5" width="28" height="25" fill="#c4c4c4" />
        <rect x="2" y="3.5" width="26" height="23" fill="#222426" />
        <text x="4" y="11" fontSize="7" fontWeight="bold" fill="#fff">&gt;_</text>
      </>
    ),
  },
  {
    name: 'Pocket Browser',
    art: (
      <>
        <circle cx="15" cy="15" r="15.8" fill="#fff" />
        <path d="M6 24V15a9 9 0 1 1 9 9z" fill="#1e88f0" />
        <path d="M9.5 20.5V15a5.5 5.5 0 1 1 5.5 5.5z" fill="#fff" />
        <circle cx="15" cy="15" r="3.6" fill="#1464d8" />
      </>
    ),
  },
  {
    name: 'Activity Monitor',
    art: (
      <>
        <rect x="1" y="1" width="28" height="28" rx="2" fill="#b0aca0" />
        <rect x="3" y="3" width="24" height="24" fill="#231f10" />
        <path d="M3 9h24M3 15h24M3 21h24M9 3v24M15 3v24M21 3v24" stroke="#4c4418" strokeWidth=".8" />
        <path d="M3 16h4l2-6 3 12 3-15 2 10 2-3h8" fill="none" stroke="#e8c828" strokeWidth="1.3" />
        <path d="M17 23h8" stroke="#e8c828" strokeWidth="2" strokeDasharray="2 1" />
      </>
    ),
  },
  {
    name: 'Device Rack',
    art: (
      <>
        <path d="M0 5l15-3 15 3-2 20-15 5L2 25z" fill="#34343a" />
        <path d="M0 5l13 3 17-3-15-3z" fill="#4c4c54" />
        <path d="M13 8v22" stroke="#111" />
        <path d="M15 11l12-2v7l-12 2zM15 21l11-2v6l-11 3z" fill="#4030f0" />
        <path d="M18 10v7M22 10v6" stroke="#c8c0ff" />
        <path d="M3 11l8 2v5l-8-2z" fill="#141418" /><path d="M14 0v4" stroke="#e03030" strokeWidth="2" />
      </>
    ),
  },
  {
    name: 'Automation',
    art: (
      <>
        <path d="M2 4l24-3 1 6-24 3z" fill="#f0f0f0" />
        <path d="M1 10l24-3 2 19-24 3z" fill="#18a8e8" />
        <path d="M6 14h4v4H6zM17 12h4v4h-4zM8 22c4 3 9 2 12-1M13 8v6l3 4" stroke="#101820" strokeWidth="1.6" fill="none" />
        <path d="M25 1l4 2-10 20-3 2v-4z" fill="#f0b030" />
      </>
    ),
  },
  {
    name: 'Inkscape',
    art: (
      <>
        <path d="M15 1c3 0 13 11 14 14 0 4-7 3-7 5s3 2 2 4-4 1-5 3-4 3-6 1 1-4-2-5-3-2-1-4-8-1-9-5C2 11 12 1 15 1z" fill="#1c1c22" />
        <path d="M15 3l6 7-3 2-3-2-2 3-4-2z" fill="#f0f4f8" />
        <path d="M24 24l3-1 1 2-3 1zM4 22l3-1v2z" fill="#1c1c22" />
      </>
    ),
  },
  {
    name: 'Capture One',
    art: (
      <>
        <circle cx="15" cy="15" r="14.3" fill="#e4eef4" />
        <circle cx="15" cy="15" r="12.5" fill="#e4f2fa" stroke="#3c98cc" strokeWidth="1.3" />
        <text x="15" y="23" fontSize="23" fontWeight="bold" textAnchor="middle" fill="#2c90c4" className="font-['Liberation_Serif',serif]">1</text>
      </>
    ),
  },
  { name: 'Fantastical', running: true, art: <Calendar /> },
  {
    name: 'System Preferences',
    art: (
      <>
        <rect x="1" y="2" width="28" height="26" rx="2" fill="#a4acb2" />
        <circle cx="15" cy="15" r="11" fill="#3c4044" />
        <circle cx="15" cy="15" r="9" fill="none" stroke="#a8aeb2" strokeWidth="2.5" strokeDasharray="1.5 1" />
        <circle cx="15" cy="15" r="7" fill="none" stroke="#c4c8cc" strokeWidth="1.5" />
        <path d="M15 15V8M15 15l6 4M15 15l-6 4" stroke="#c4c8cc" strokeWidth="1.8" />
      </>
    ),
  },
  {
    name: 'VNC Viewer',
    art: (
      <>
        <rect x="-1.5" y="-2" width="33" height="33" rx="2" fill="#0a84fc" />
        <path d="M4 6l5.5 17L15 6" fill="none" stroke="#fff" strokeWidth="2.2" />
        <path d="M18 14V9a3.5 3.5 0 0 1 7 0v5M26 17h-5a3 3 0 0 0-3 3v1a3 3 0 0 0 3 3h5" fill="none" stroke="#fff" strokeWidth="2" />
      </>
    ),
  },
  {
    name: 'VirtualBox',
    art: (
      <>
        <path d="M15 0l12 5-1 16-11 8L4 21 3 5z" fill="#1d3c6c" />
        <path d="M15 1l11 4-11 5L4 5z" fill="#c8d4e4" /><path d="M15 3l5 2-5 2-5-2z" fill="#1d3c6c" />
        <path d="M5 8l9 4v14l-8-6zM25 8l-9 4v14l8-6z" fill="#8ca4c4" />
        <path d="M7 12l5 2v7l-4-3zM23 12l-5 2v7l4-3z" fill="#eef2f8" />
      </>
    ),
  },
  {
    name: 'Arduino', running: true,
    art: (
      <>
        <circle cx="15" cy="15" r="15" fill="#0a9396" />
        <path d="M15 15c-3-5-5-5-6-5a4.8 4.8 0 0 0 0 9.6c2 0 4-1 6-4.6 2-4 4-5 6-5a4.8 4.8 0 0 1 0 9.6c-2 0-4-1-6-4.6z" fill="none" stroke="#fff" strokeWidth="2.2" />
        <path d="M7 15h4M19 15h4M21 13v4" stroke="#fff" strokeWidth="1.2" />
      </>
    ),
  },
  {
    name: 'Signal Wave', running: true,
    art: (
      <>
        <defs>
          <linearGradient id="wave" x1="0" x2="0" y1="0" y2="1">
            <stop offset="0" stopColor="#1c6ca4" />
            <stop offset="1" stopColor="#0c0c6c" />
          </linearGradient>
        </defs>
        <rect x="-1.5" y="-2" width="33" height="33" fill="url(#wave)" />
        <path d="M-1 17c1 6 4 10 8 8s5-13 8-18 6-3 8 2 4 9 8 9" fill="none" stroke="#c89a58" strokeWidth="1.5" />
        <path d="M-1 20c2-6 6-8 9-4s4 11 8 9 5-10 8-14 5-6 7-5" fill="none" stroke="#c89a58" strokeWidth="1.5" />
      </>
    ),
  },
];

const stacks: typeof apps = [
  {
    name: 'Downloads',
    art: (
      <>
        <path d="M5 1h14l6 7v21H5z" fill="#f6f6f6" />
        <path d="M19 1v7h6z" fill="#c8c8c8" />
        <path d="M8 10h11M8 13h13M8 16h13M8 19h9" stroke="#d8d8d8" />
        <text x="15" y="27" fontSize="5" textAnchor="middle" fill="#999">HTML</text>
      </>
    ),
  },
  {
    name: 'Trash',
    art: (
      <>
        <path d="M4 4h22l-3 23c0 3-16 3-16 0z" fill="#e4e4e2" opacity=".92" />
        <ellipse cx="15" cy="4.5" rx="11" ry="3" fill="#fafafa" stroke="#b8b8b8" />
        <path d="M9 4h2M14 3h3M19 5h2" stroke="#4a5a50" strokeWidth="1.5" />
        <path d="M9 10l1 16M15 10v17M21 10l-1 16" stroke="#d0d0ce" strokeWidth="1.2" />
      </>
    ),
  },
];

const DockItem = ({ name, running, art }: (typeof apps)[number]) => (
  <button aria-label={name} className="flex w-[35px] flex-col items-center gap-0.5">
    <svg viewBox="0 0 30 30" className="size-[30px] overflow-visible">{art}</svg>
    {running && <span className="size-1 rounded-full bg-[#55200c]" />}
  </button>
);

const Dock = () => (
  <nav aria-label="Dock" className="mx-auto mt-0.5 flex h-11 shrink-0 items-start rounded-t-[5px] bg-linear-to-b from-[#c4884a] to-[#d2974f] px-[3px] pt-1.5 font-['Liberation_Sans',sans-serif]">
    {apps.map((app) => (
      <DockItem key={app.name} {...app} />
    ))}
    <span className="mx-2 h-8 w-px bg-[#8c5c2c]" />
    {stacks.map((app) => (
      <DockItem key={app.name} {...app} />
    ))}
  </nav>
);

/* ---------- Page ---------- */

const App = () => (
  <div className="flex h-screen flex-col overflow-hidden bg-linear-to-b from-[#36506c] from-50% via-[#123a40] via-95% to-[#a87840] to-95%">
    <MenuBar />
    <main className="flex min-h-0 flex-1 flex-col rounded-t-[5px] rounded-b-[5px] bg-[#dcdcdc] font-[Roboto,sans-serif] text-[11px] text-black">
      <div className="grid h-[22px] shrink-0 grid-cols-3 items-center rounded-t-[5px] border-b border-[#a4a4a4] bg-linear-to-b from-[#e8e8e8] to-[#d2d2d2] px-2">
        <div className="flex gap-2">
          <button aria-label="Close" className="size-3 rounded-full bg-[#ff4a42]" />
          <button aria-label="Minimize" className="size-3 rounded-full bg-[#ffbd08]" />
          <button aria-label="Zoom window" className="size-3 rounded-full bg-[#00d02c]" />
        </div>
        <h1 className="text-center font-[Inter,sans-serif] text-[13px] whitespace-nowrap text-[#3c3c3c]">
          SDR# v1.0.0.1700 - Spy Server Network
        </h1>
        <span />
      </div>
      <Toolbar />
      <div className="flex min-h-0 flex-1">
        <Sidebar />
        <SidebarScroll />
        <div className="ml-0.5 flex min-w-0 flex-1 flex-col">
          <Spectrum />
          <Waterfall />
        </div>
        <DisplayControls />
      </div>
      {/* resize grip */}
      <svg viewBox="0 0 12 10" className="h-2.5 w-3 shrink-0 self-end" stroke="#555">
        <path d="M1 10L11 0M5 10l7-7M9 10l3-3" />
      </svg>
    </main>
    <Dock />
  </div>
);

export default App;
